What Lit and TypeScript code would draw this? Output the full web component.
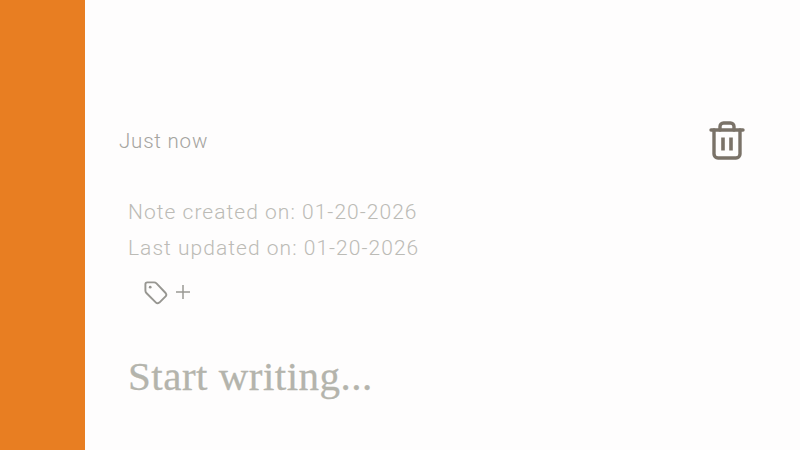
import { LitElement, html, css } from "lit";
import { customElement } from "lit/decorators.js";

@customElement("app-root")
export class AppRoot extends LitElement {
  static styles = css`
    :host { display: flex; width: 800px; height: 450px; background: #fefdfd; overflow: hidden; font-family: "Roboto", "Liberation Sans", sans-serif; font-weight: 300; }
    .side { width: 85px; flex: none; background: #e87e22; }
    .main { flex: 1; display: flex; flex-direction: column; padding: 120px 55px 0 34px; }
    .top { display: flex; justify-content: space-between; align-items: center; height: 42px; }
    .when { font-size: 20.5px; color: #a5a49f; letter-spacing: 0.8px; }
    .trash { display: block; width: 36px; height: 42px; }
    .meta { display: flex; flex-direction: column; margin: 38px 0 0 9px; gap: 11px; font-size: 21px; line-height: 25px; color: #bcbbb6; letter-spacing: 1.03px; }
    .tags { display: flex; align-items: center; margin: 16px 0 0 24px; gap: 7px; height: 30px; }
    .title { margin: 46px 0 0 9px; font-family: "Liberation Serif", serif; font-weight: 400; font-size: 41px; line-height: 46px; color: #b4b4ac; letter-spacing: 0.5px; -webkit-text-stroke: 0.3px #b4b4ac; }
  `;
  render() {
    return html`
      <div class="side"></div>
      <div class="main">
        <div class="top">
          <div class="when">Just now</div>
          <svg class="trash" viewBox="0 0 36 42" fill="none" stroke="#7a7268" stroke-width="3.400" stroke-linecap="round" stroke-linejoin="round">
            <path d="M2 10H34" />
            <path d="M11 10V6.500A3.500 3.500 0 0 1 14.500 3H21.500A3.500 3.500 0 0 1 25 6.500V10" />
            <path d="M5 10V34A4 4 0 0 0 9 38H27A4 4 0 0 0 31 34V10" />
            <path d="M14 17.500V30.500M22 17.500V30.500" stroke-width="3.600" stroke-linecap="butt" />
          </svg>
        </div>
        <div class="meta">
          <div>Note created on: 01-20-2026</div>
          <div>Last updated on: 01-20-2026</div>
        </div>
        <div class="tags">
          <svg width="25" height="25" viewBox="0 0 26 26" fill="none" stroke="#979691" stroke-width="2" stroke-linejoin="round">
            <path d="M2.500 4.500Q2.500 2.500 4.500 2.500H11.500Q13 2.500 14 3.500L23.500 13.500Q25 15.500 23.500 17L17 23.500Q15 25 13.500 23.500L3.500 13.500Q2.500 12.500 2.500 11Z" />
            <circle cx="7.500" cy="7.500" r="1.400" fill="#979691" stroke="none" />
          </svg>
          <svg width="16" height="16" viewBox="0 0 16 16" stroke="#9a9994" stroke-width="1.500"><path d="M8 1V15M1 8H15" /></svg>
        </div>
        <div class="title">Start writing...</div>
      </div>
    `;
  }
}
